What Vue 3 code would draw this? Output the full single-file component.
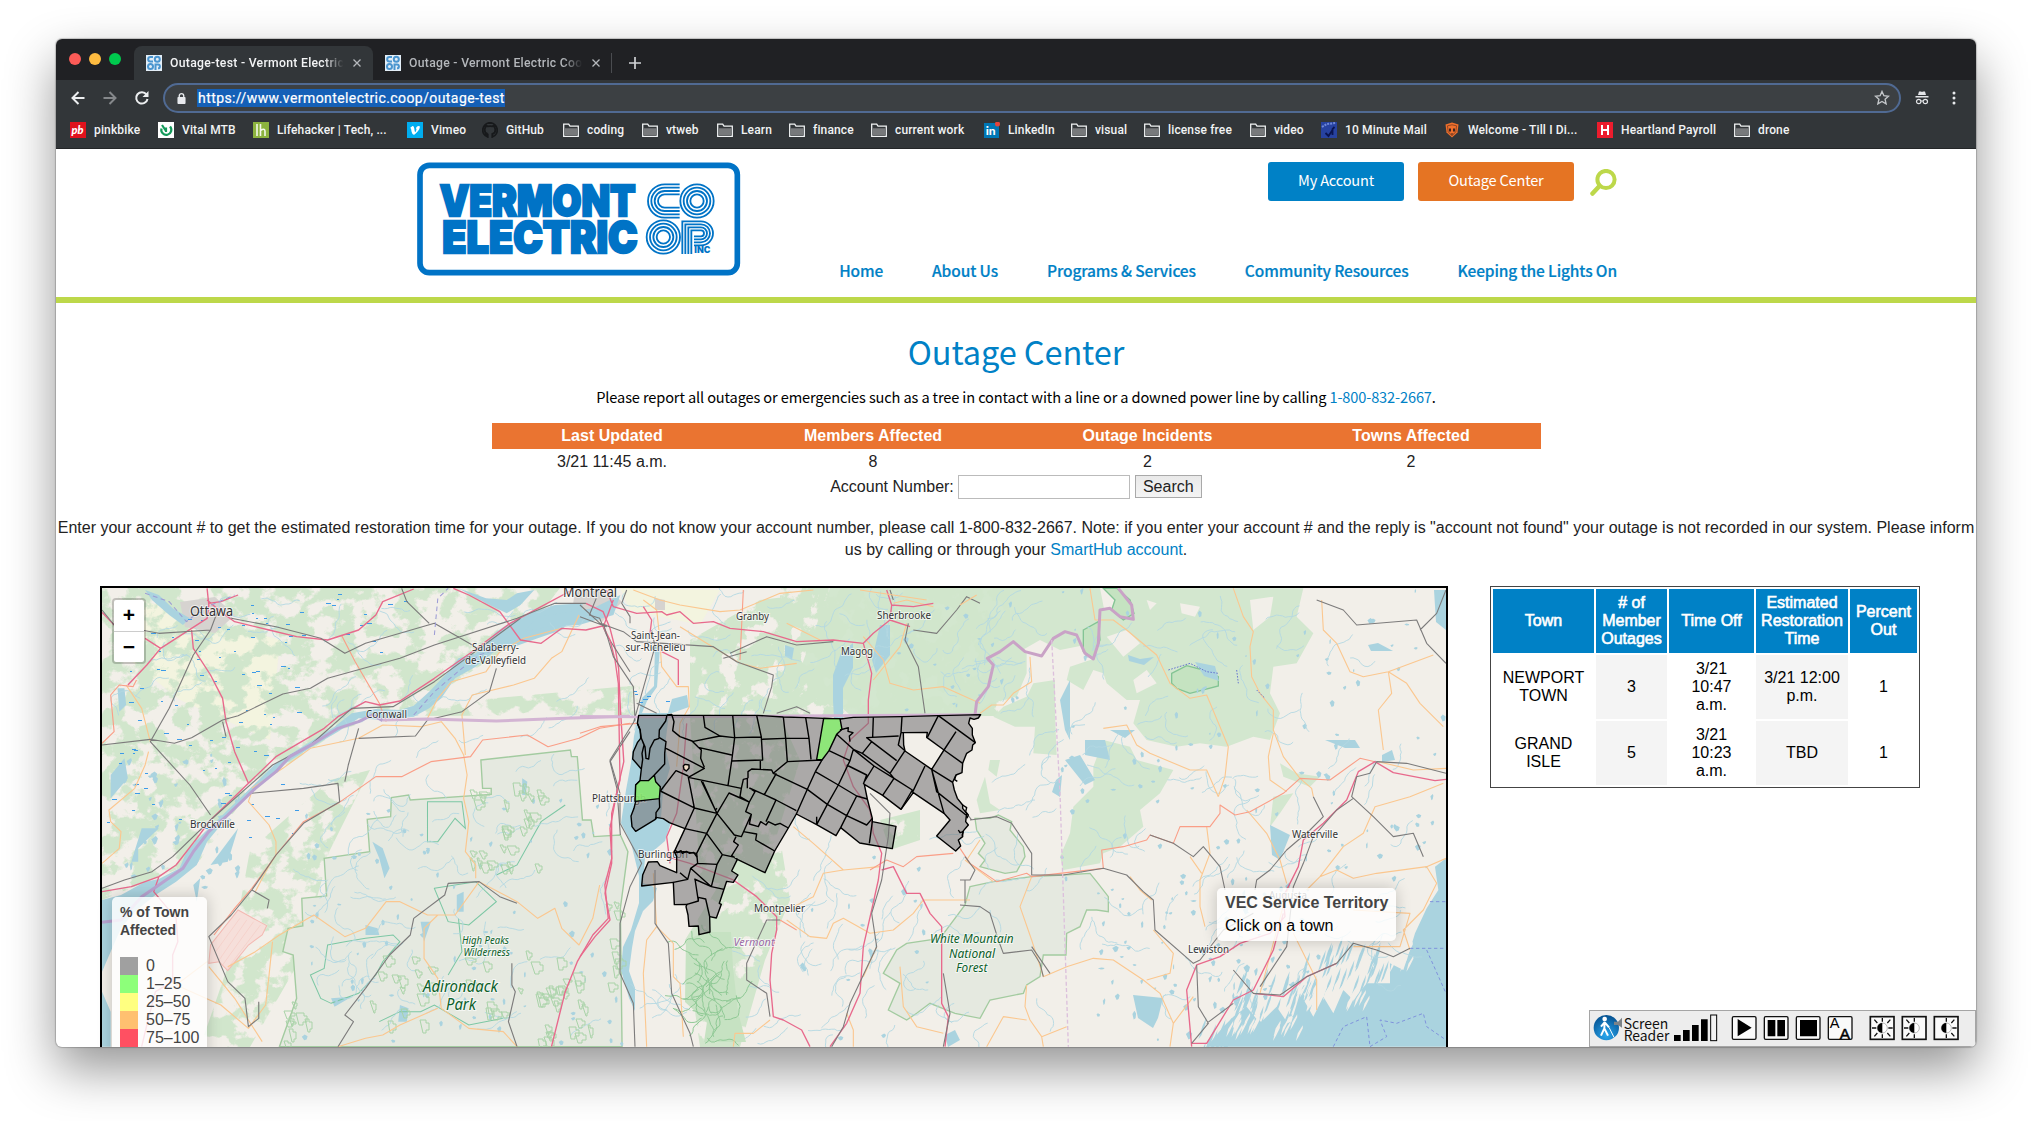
<script setup>
const bookmarks = [
  { label: 'pinkbike', icon: 'pb', width: 48 },
  { label: 'Vital MTB', icon: 'vital', width: 55 },
  { label: 'Lifehacker | Tech, ...', icon: 'lh', width: 114 },
  { label: 'Vimeo', icon: 'vimeo', width: 35 },
  { label: 'GitHub', icon: 'github', width: 41 },
  { label: 'coding', icon: 'folder', width: 39 },
  { label: 'vtweb', icon: 'folder', width: 35 },
  { label: 'Learn', icon: 'folder', width: 32 },
  { label: 'finance', icon: 'folder', width: 42 },
  { label: 'current work', icon: 'folder', width: 73 },
  { label: 'LinkedIn', icon: 'linkedin', width: 47 },
  { label: 'visual', icon: 'folder', width: 33 },
  { label: 'license free', icon: 'folder', width: 66 },
  { label: 'video', icon: 'folder', width: 31 },
  { label: '10 Minute Mail', icon: 'mail', width: 83 },
  { label: 'Welcome - Till I Di...', icon: 'shield', width: 113 },
  { label: 'Heartland Payroll', icon: 'heart', width: 97 },
  { label: 'drone', icon: 'folder', width: 34 },
]
const nav = ['Home', 'About Us', 'Programs & Services', 'Community Resources', 'Keeping the Lights On']
const outages = [
  { town: 'NEWPORT TOWN', count: 3, off: '3/21 10:47 a.m.', eta: '3/21 12:00 p.m.', pct: 1 },
  { town: 'GRAND ISLE', count: 5, off: '3/21 10:23 a.m.', eta: 'TBD', pct: 1 },
]
const legend = [
  { c: '#a0a0a0', t: '0' },
  { c: '#8dff7a', t: '1–25' },
  { c: '#ffff80', t: '25–50' },
  { c: '#ffc070', t: '50–75' },
  { c: '#ff5062', t: '75–100' },
]
// x, baseline, width, size
const cities = [
  ['Ottawa', 190, 616, 43, 14], ['Montréal', 563, 596.5, 54, 14], ['Salaberry-', 472, 651, 47, 11],
  ['de-Valleyfield', 465, 663.5, 61, 11], ['Cornwall', 366, 717.5, 41, 11], ['Brockville', 190, 827.5, 45, 11],
  ['Plattsburgh', 592, 802, 54, 11], ['Burlington', 638, 857.5, 50, 11], ['Saint-Jean-', 631, 638.5, 49, 11],
  ['sur-Richelieu', 625.5, 651, 60, 11], ['Granby', 736, 619.5, 33, 11], ['Sherbrooke', 877, 618.5, 54, 11],
  ['Magog', 841, 654.5, 32, 11], ['Montpelier', 754, 912, 51, 11], ['Waterville', 1292, 837.5, 46, 11],
  ['Lewiston', 1188, 952.5, 41, 11], ['Augusta', 1269, 899, 38, 11],
]
const parks = [
  ['High Peaks', 462, 944, 47, 11], ['Wilderness', 463.5, 956, 46.5, 11], ['Adirondack', 423, 992, 75, 15.5],
  ['Park', 446, 1010, 30, 15.5], ['White Mountain', 930, 943, 83.5, 12.5], ['National', 949, 957.5, 46, 12.5],
  ['Forest', 956, 971.5, 31.5, 12.5],
]

// deterministic scatter for ponds, brooks and park parcels
let seed = 7
const rnd = () => {
  seed = (seed * 16807) % 2147483647
  return seed / 2147483647
}
const walk = (x, y, n, step, dir) => {
  let d = `M${x.toFixed(1)} ${y.toFixed(1)}`
  for (let i = 0; i < n; i++) {
    dir += (rnd() - 0.5) * 1.3
    x += Math.cos(dir) * step
    y += Math.sin(dir) * step
    d += `L${x.toFixed(1)} ${y.toFixed(1)}`
  }
  return d
}
const scatter = (regions, fn) =>
  regions.map(([x, y, w, h, n, k]) => Array.from({ length: n }, () => fn(x + rnd() * w, y + rnd() * h, k || 1)).join('')).join('')
const pond = (x, y, k) => {
  const a = rnd() * 2.4 * k
  const b = 0.7 + rnd() * 2 * k
  const s = (rnd() - 0.3) * 3
  return `M${x.toFixed(1)} ${y.toFixed(1)}l${(1 + a).toFixed(1)} ${(-b).toFixed(1)}l${(1 + s).toFixed(1)} ${(b * 0.8).toFixed(1)}l${(-a * 0.5).toFixed(1)} ${(b * 1.5).toFixed(1)}l${(-1.5 - s * 0.5).toFixed(1)} ${(b * 0.4).toFixed(1)}z`
}
const ponds = scatter([
  [1060, 590, 385, 290, 100], [1090, 880, 230, 160, 100, 1.3], [300, 800, 320, 245, 90], [110, 750, 130, 140, 45, 1.5],
  [880, 590, 160, 120, 20], [800, 850, 150, 190, 20],
], pond)
const dashes = scatter([[103, 600, 200, 240, 95], [300, 590, 120, 80, 14], [630, 690, 50, 20, 6]], (x, y) => `M${Math.round(x)} ${Math.round(y) + 0.5}h${2 + Math.round(rnd() * 3)}`)
const brooks = scatter([
  [320, 680, 290, 350, 75], [630, 590, 400, 120, 55], [1000, 600, 430, 400, 105], [780, 830, 220, 210, 45],
  [140, 600, 460, 110, 32], [660, 940, 120, 100, 12],
], (x, y) => walk(x, y, 9 + Math.floor(rnd() * 10), 3, 1.9 + rnd() * 1.2))
const parcels = scatter([[470, 780, 80, 90, 30], [370, 950, 220, 90, 34], [535, 970, 60, 70, 18], [592, 900, 26, 130, 8], [284, 1000, 26, 42, 8]], (x, y) => {
  const a = 2 + rnd() * 7
  const b = 2 + rnd() * 5
  return `M${x.toFixed(0)} ${y.toFixed(0)}h${a.toFixed(0)}v${(b / 2).toFixed(0)}h3v${b.toFixed(0)}h-${(a / 2).toFixed(0)}v3h-${(a / 2).toFixed(0)}z`
})
const preserve = scatter([[692, 938, 36, 100, 34]], (x, y) => walk(x, y, 12, 3, rnd() * 6))
const inletsWater = scatter([[1205, 1012, 30, 30, 14], [1235, 965, 80, 55, 42], [1310, 935, 80, 45, 30]], (x, y) => `M${x.toFixed(1)} ${y.toFixed(1)}l-4 9l-4 13l3 -4l4 -11z`)
const inletsLand = scatter([[1225, 1012, 80, 14, 20], [1300, 975, 70, 22, 24], [1385, 900, 30, 60, 8]], (x, y) => `M${x.toFixed(1)} ${y.toFixed(1)}l-5 8l-2 8l3 -5l4 -8z`)
</script>

<template>
  <div class="stage">
    <div class="window">
      <div class="tabstrip">
        <div class="lights"><i class="r"></i><i class="y"></i><i class="g"></i></div>
        <div v-for="(t, i) in ['Outage-test - Vermont Electric Coop', 'Outage - Vermont Electric Coop']" :key="t" class="tab" :class="{ active: i === 0 }">
          <svg class="fav" viewBox="0 0 16 16"><rect width="16" height="16" fill="#e3eef7" /><g fill="none" stroke="#4a95cf" stroke-width="2"><path d="M7 2H4.500a2 2 0 0 0 0 4.600H7" /><circle cx="11.300" cy="4.300" r="2.500" /><circle cx="4.500" cy="11.500" r="2.500" /><path d="M9.500 15V9.500h2.500a1.900 1.900 0 0 1 0 3.800" /></g></svg>
          <span class="tab-title">{{ t }}</span>
          <svg class="x" viewBox="0 0 10 10"><path d="M1.500 1.500l7 7M8.500 1.500l-7 7" stroke="#b5b8bc" stroke-width="1.300" /></svg>
        </div>
        <div class="sep"></div>
        <svg class="plus" viewBox="0 0 12 12"><path d="M6 0v12M0 6h12" stroke="#d0d2d5" stroke-width="1.700" /></svg>
      </div>

      <div class="toolbar">
        <svg class="navs" viewBox="0 0 92 20" fill="none" stroke-width="2">
          <g stroke="#eceef0"><path d="M14.500 10H2.500M8.500 4l-6 6 6 6" /><path d="M76.500 6.500a5.700 5.700 0 1 0 1 4.500" /><path d="M78.500 3v6h-6z" fill="#eceef0" stroke="none" /></g>
          <path stroke="#85888b" d="M33.500 10h12M39.500 4l6 6-6 6" />
        </svg>
        <div class="omni">
          <svg class="lock" viewBox="0 0 10 13"><rect x="0.500" y="4.700" width="9" height="7.800" rx="1" fill="#e8eaed" /><path d="M2.500 5V3.500a2.500 2.500 0 0 1 5 0V5" fill="none" stroke="#e8eaed" stroke-width="1.500" /></svg>
          <span class="url">https://www.vermontelectric.coop/outage-test</span>
          <svg class="star" viewBox="0 0 16 16"><path d="M8 1.500l1.900 4.200 4.600.5-3.400 3.100 1 4.500L8 11.500l-4.100 2.300 1-4.500L1.500 6.200l4.600-.5z" fill="none" stroke="#c3c6c9" stroke-width="1.400" /></svg>
        </div>
        <svg class="incog" viewBox="0 0 14 14" fill="#e3e5e8"><path d="M4 0.500h2l1 .6 1-.6h2l1 3.500H3zM0.500 5h13v1.500h-13z" /><g fill="none" stroke="#e3e5e8" stroke-width="1.200"><circle cx="3.700" cy="10.500" r="2.200" /><circle cx="10.300" cy="10.500" r="2.200" /><path d="M6 10h2" /></g></svg>
        <svg class="dots" viewBox="0 0 4 14" fill="#e8eaed"><circle cx="2" cy="2" r="1.500" /><circle cx="2" cy="7" r="1.500" /><circle cx="2" cy="12" r="1.500" /></svg>
      </div>

      <div class="bookmarks">
        <div v-for="b in bookmarks" :key="b.label" class="bm">
          <svg viewBox="0 0 16 16">
            <g v-if="b.icon === 'folder'"><path d="M.7 14.300V2.200h5l1.300 1.900h8.300v10.200z" fill="none" stroke="#f1f3f4" stroke-width="1.300" /><path d="M2 6.200h12v6.900H2z" fill="#77797b" /></g>
            <g v-else-if="b.icon === 'pb'"><rect width="16" height="16" fill="#e0121d" /><text x="1.500" y="12" class="ic i" font-size="11">pb</text></g>
            <g v-else-if="b.icon === 'vital'"><rect width="16" height="16" fill="#fff" /><path d="M12 4.500a5 5 0 1 1-8.500 2M8 10V5.500M4 3l4 6" fill="none" stroke="#159a5b" stroke-width="2.200" /></g>
            <g v-else-if="b.icon === 'lh'"><rect width="16" height="16" fill="#8cb33e" /><path d="M4 2v12M7.500 2v12M7.500 8.500q4.500-3 4.500 1V14" fill="none" stroke="#f4f8ea" stroke-width="1.600" /></g>
            <g v-else-if="b.icon === 'vimeo'"><rect width="16" height="16" fill="#00adef" /><path d="M3 6l2.500-2q1.500-.5 2 4t2-.5l-.5-1.500q1.500-3 4-1.500-.5 4-5.500 8-2 1-3-3L4 6.500z" fill="#fff" /></g>
            <g v-else-if="b.icon === 'github'"><path d="M8 .8A7.300 7.300 0 0 0 5.700 15v-2.300q-2 .2-2.600-1.500M8 .8A7.300 7.300 0 0 1 10.300 15v-3q3-.5 3-4 0-1.500-.8-2.500.3-1-.1-2-1 .1-2 .9-2.300-.5-4.800 0-1-.8-2-.9-.4 1-.1 2-.8 1-.8 2.500 0 3.500 3 4" fill="none" stroke="#17191b" stroke-width="1.800" /></g>
            <g v-else-if="b.icon === 'linkedin'"><rect y="1" width="15" height="15" fill="#0077b5" /><text x="1.700" y="13" class="ic" font-size="12">in</text><circle cx="13.500" cy="2" r="2.500" fill="#e5443c" /></g>
            <g v-else-if="b.icon === 'mail'"><rect width="16" height="16" fill="#2742a0" /><path d="M1 5l5-3 9-1" stroke="#6f88d6" stroke-width="2" stroke-dasharray="2 1" fill="none" /><path d="M13.500 5l-2 2v6M11.500 8l-4 6-3-3" stroke="#0a1450" stroke-width="1.800" fill="none" /></g>
            <g v-else-if="b.icon === 'shield'"><path d="M1.500 2.500L8 .5l6.500 2-1 8L8 15.500l-5.500-5z" fill="#f0702c" /><path d="M5 6.500h2v3H5zM9 6.500h2v3H9zM6.500 11.500h3L8 13z" fill="#3c2420" /><path d="M3.500 3.800L8 2.800l4.500 1-.7 6L8 13.800l-3.800-4z" fill="none" stroke="#7a3a20" stroke-width=".8" /></g>
            <g v-else><rect width="16" height="16" fill="#ec1c2d" /><path d="M5 3v10M11 3v10M5 8h6" stroke="#fff" stroke-width="2" /></g>
          </svg>
          <span :style="{ width: b.width + 'px' }">{{ b.label }}</span>
        </div>
      </div>

      <header class="site">
        <svg class="logo" viewBox="0 0 972 342">
          <rect x="9" y="10" width="952" height="322" rx="28" fill="none" stroke="#0073c6" stroke-width="17" />
          <g fill="#0073c6" stroke="#0073c6" class="logotext">
            <text x="68" y="162" font-size="127" textLength="588" lengthAdjust="spacingAndGlyphs" stroke-width="7">VERMONT</text>
            <text x="76" y="274" font-size="131" textLength="586" lengthAdjust="spacingAndGlyphs" stroke-width="7">ELECTRIC</text>
          </g>
          <g fill="none" stroke="#0073c6" stroke-width="5.500" transform="translate(-50 -38)">
            <g v-for="r in [50, 40, 30, 20]" :key="r">
              <path :d="`M838 ${155 - r}H793a${r} ${r} 0 0 0 0 ${2 * r}H838`" />
              <circle cx="789" cy="263" :r="r" />
            </g>
            <circle cx="890" cy="155" r="53" fill="#fff" stroke="none" />
            <circle v-for="r in [50, 40, 30, 20]" :key="'o' + r" cx="890" cy="155" :r="r" />
            <path d="M846 314V216H902a36 36 0 0 1 0 72H881" />
            <path d="M855 314V225H902a27 27 0 0 1 0 54H881M864 314V234H902a18 18 0 0 1 0 36H881M873 314V243H902a9 9 0 0 1 0 18H881" />
          </g>
          <text x="832" y="273" font-size="26" font-weight="800" class="logotext" fill="#0073c6" textLength="48" lengthAdjust="spacingAndGlyphs">INC</text>
        </svg>
        <div class="right">
          <div class="buttons">
            <a class="btn blue">My Account</a><a class="btn orange">Outage Center</a>
            <svg class="mag" viewBox="0 0 27 27" fill="none" stroke="#bdd84a"><circle cx="16" cy="10.500" r="8.600" stroke-width="4" /><path d="M9.500 17L2.500 24.500" stroke-width="4.500" stroke-linecap="round" /></svg>
          </div>
          <nav><a v-for="n in nav" :key="n">{{ n }}</a></nav>
        </div>
      </header>

      <main>
        <h1>Outage Center</h1>
        <p class="report">Please report all outages or emergencies such as a tree in contact with a line or a downed power line by calling <a>1-800-832-2667</a>.</p>
        <div class="summary head"><b>Last Updated</b><b>Members Affected</b><b>Outage Incidents</b><b>Towns Affected</b></div>
        <div class="summary"><span>3/21 11:45 a.m.</span><span>8</span><span>2</span><span>2</span></div>
        <div class="form"><label>Account Number:</label><input type="text" /><button>Search</button></div>
        <p class="note"><span class="n1">Enter your account # to get the estimated restoration time for your outage. If you do not know your account number, please call 1-800-832-2667. Note: if you enter your account # and the reply is "account not found" your outage is not recorded in our system. Please inform</span><br />us by calling or through your <a>SmartHub account</a>.</p>

        <div class="content">
          <div class="map">
            <svg class="tiles" viewBox="102 588 1344 459" width="1344" height="459">
              <defs>
                <filter id="wood" x="0" y="0" width="1" height="1" color-interpolation-filters="sRGB"><feTurbulence type="fractalNoise" baseFrequency=".045 .055" numOctaves="6" seed="4" /><feColorMatrix values="0 0 0 0 .82 0 0 0 0 .902 0 0 0 0 .8 11 0 0 0 -4.9" /></filter>
                <filter id="dense" x="0" y="0" width="1" height="1" color-interpolation-filters="sRGB"><feTurbulence type="fractalNoise" baseFrequency=".05" numOctaves="6" seed="9" /><feColorMatrix values="0 0 0 0 .82 0 0 0 0 .902 0 0 0 0 .8 13 0 0 0 -4.6" /></filter>
                <clipPath id="cw"><path d="M102 588H560L520 640L420 705L340 730L250 790L200 860L102 900ZM420 705L640 685V715L420 716ZM250 850L330 780L370 770L330 850L300 960L250 1047H200L230 960Z" /></clipPath>
                <clipPath id="cd"><path d="M690 640L760 600L860 588H1010V716H690ZM722 880L782 850L790 900L765 960L740 1047H700L685 940ZM690 716H780L800 760L760 890L700 880ZM780 588H1010V700H780ZM880 820l40-10 0 30-30 10z" /></clipPath>
              </defs>
              <rect x="102" y="588" width="1344" height="459" fill="#f2efe9" />
              <path d="M140 600L280 640L270 740L180 700L130 660ZM620 588L720 590L700 625L630 610Z" fill="#f3f5dc" opacity=".8" />
              <g clip-path="url(#cw)"><rect x="102" y="588" width="560" height="459" filter="url(#wood)" /></g>
              <path d="M575 590l35 0 12 12-20 20-30-10zM180 602l35-5 20 18-20 18-30-6zM890 598l30 4 6 20-20 8zM655 598l10 2 0 10-10 0z" fill="#d6d3d0" />
              <path d="M830 588H1100L1110 640L1060 650L1040 640L1005 660L980 715H850L800 670Z" fill="#d3e7cf" />
              <g clip-path="url(#cd)"><rect x="680" y="588" width="340" height="459" filter="url(#dense)" /></g>

              <g transform="translate(960 580) scale(.33333)">
                <path fill="#d3e7cf" d="M475 25H1030L1010 110L1060 160L1010 250L940 260L930 340L960 400L930 480L880 470L800 500L720 490L650 500L560 480L520 430L540 360L500 360L440 310L430 280L400 270L370 330L320 300L330 260L400 237L420 180L420 90L455 85ZM120 215L160 185L200 215V280L170 350L90 370L50 400L60 350L90 320L100 255ZM220 310L285 300V400L290 525L220 520L225 440L165 440L100 410L130 380L200 350ZM430 480L510 500L530 540L640 570L600 640L540 690L550 740L480 800L430 820L420 850L310 870L300 830L330 760L340 680L400 620L400 560ZM75 590L90 670L120 690L60 700L50 660ZM960 550L1010 580L1080 590L1050 620L970 590ZM940 650L1000 640L960 700L930 740ZM90 540L120 540L110 590L85 570Z" />
                <path fill="#f2efe9" d="M660 70l60 10-15 30-40-10zM870 60l70-10-10 60-50 40zM560 60l30 10-20 20zM440 170l60-20 40 40-50 40zM520 300l40-30 30 40-60 30z" />
                <g fill="#e5e9e0" stroke="#a3cba0" stroke-width="4">
                  <path d="M45 715L90 715L115 705L155 725L150 750L190 800L195 830L170 875L135 880L60 860L75 840L55 820L75 790L50 750Z" />
                  <path d="M30 920L100 905L215 890L310 885L390 880L410 905L445 950L445 995L410 990L380 990L360 1040L320 1060L318 1125H250L240 1190L200 1215L190 1240L90 1260L60 1315L-15 1300L-90 1270L-130 1300L-160 1320L-215 1290L-180 1210L-230 1180L-190 1110L-160 1090L-60 1075L15 975Z" />
                </g>
                <path fill="#c5e3c1" stroke="#83c494" stroke-width="4" d="M635 280L680 257L730 270L775 290V318L690 340L650 325L635 310ZM370 150L415 125L420 180L400 235L370 215ZM430 25L470 25L510 60L522 100L490 120L455 90L465 60Z" />
              </g>

              <g transform="translate(90 575) scale(.34438 .33333)">
                <path fill="#e5e9e0" stroke="#a3cba0" stroke-width="4" d="M1135 555L1395 525L1398 545L1415 545L1430 735L1455 735L1463 785L1540 780L1562 830L1540 1000L1545 1415H550L600 1270L590 1140L560 1130L575 1060L618 1053L615 970L687 963L680 850L812 830L805 733L873 725L875 668L925 660L930 675L1165 658V640H1140Z" />
                <path fill="#f6dfda" stroke="#f3b9b2" stroke-width="3" d="M430 1005L513 1052L500 1080L460 1110L400 1187L375 1160L345 1165L350 1110Z" />
                <path d="M365 1130l70-100M375 1155l80-120M385 1170l90-130M400 1180l95-130" stroke="#f3c5be" stroke-width="1.500" />
                <g fill="#aad3df">
                  <path d="M35 975L90 960L160 920L200 912L260 880L280 830L330 775L400 705L470 635L540 565L640 500L710 455L760 415L830 402L900 405L940 392L985 350L1040 290L1070 250L1120 235L1180 170L1240 130L1290 110L1350 90L1430 85V115L1400 130L1370 165L1300 190L1240 212L1180 225L1120 275L1060 310L1020 370L985 400L940 425L850 435L780 430L720 470L650 512L560 570L480 640L400 725L340 800L310 870L250 920L190 960L130 1010L90 1060L60 1130L35 1190Z" />
                  <path d="M35 1250L60 1310V1415H35ZM1070 40L1150 70L1210 75L1240 55L1290 45L1250 90L1210 115L1150 85ZM1460 100L1540 60L1520 120L1420 150L1330 155L1260 170L1300 125ZM160 45L200 60L240 100L290 130L270 150L230 120L180 75ZM80 340l20 0 5 50-20 20zM60 600l40-50 10 60-50 60zM150 760l50 0-60 60 0 40-20 0zM820 800l30 20 20 60-15 30-15-60zM800 1050l35 10 5 20-40 0zM960 1040l30 0-20 60zM1065 960l20-10 0 60-20 0zM900 1290l25 10-5 40-25 0zM1255 610l15 10-5 40-10 0zM700 1270l60-5-50 30zM350 870l80-110-30 100zM300 930l20-20-10 70z" />
                </g>
                <g fill="none" stroke="#7cc7a4" stroke-width="3"><path d="M700 1285L780 1255L830 1200L850 1160L900 1100L880 1080L800 1090L740 1100L690 1110L680 1180L640 1200L670 1270ZM980 680L1080 680L1090 760L1060 730L1010 800L980 800ZM1000 940L1120 920L1180 980L1100 1050L1040 1040ZM1040 1200L1080 1130L1070 1030M840 1340L900 1310L960 1310L1000 1290L1100 1350L1200 1330M1180 900L1240 870L1310 740L1380 690" /></g>
              </g>
              <path d="M655 645l5 2-3 40-10 14-5 12h26l4-14 15-4 2 12-20 7-4 32 5 22-7 24-2 26 10 4-6 19-20 17-2 25 14 5-4 13-10 10-8 20-3 17-3 23 6 17v23l-6-13-8-28 2-23 8-17 8-27v-27l-8-33-10-20 5-33 5-27 3-27 8-38 12-12z" fill="#aad3df" />
              <path d="M640 716h20l-4 14-6 26-8 12zM833 675l8-22 12-10 0 25-10 20 0 30h-9l-1-17zM785 645l9 3-2 12-7-4zM872 660l8-35 10 0 0 30-14 18zM1128 655l12 4 14-2-10 8-15-4zM1195 662l20 4 4 15-15-5zM1060 700l10-20 0 60-5-10zM1085 740l20 0 5 20-25-5zM1110 730l25 0-10 8zM1056 780l6-5-2 22-8-5zM1085 785l10-5-15-25-15 5zM1368 645l10-2 15 8-22 0zM1382 755l10-5 3 10-13 2zM1133 995l30 3-5 20-5 10-15-10zM1270 825l20 10-10 25-8-5zM1434 590h12v40l-10-8zM1325 740l30 0 5 8-15 0zM945 1035l10-5 5 10-12 7z" fill="#aad3df" />
              <path :d="ponds" fill="#aad3df" />
              <g transform="translate(960 580) scale(.33333)">
                <path fill="#aad3df" d="M1458 835L1425 860L1435 930L1400 985L1365 1060L1350 1110L1330 1170L1290 1150L1290 1210L1220 1210L1180 1260L1150 1230L1120 1300L1090 1250L1060 1310L1020 1240L990 1340L950 1280L900 1330L860 1280L820 1310L790 1340L740 1400H1458Z" />
              </g>
              <path :d="inletsWater" fill="#aad3df" />
              <path :d="inletsLand" fill="#f2efe9" />
              <path :d="brooks" fill="none" stroke="#b3d8e2" stroke-width=".9" />
              <path :d="dashes" stroke="#3d9be8" stroke-width="1" />
              <path :d="parcels" fill="none" stroke="#a9d3a8" stroke-width="1" />
              <path d="M686 940l20-8 25 0 2 35 5 45 8 30H704l3-20-22-20z" fill="#c6e2c2" />
              <path :d="preserve" fill="none" stroke="#8fc995" stroke-width="1" />

              <g fill="none" stroke-width="3.300" stroke-linejoin="round">
                <g transform="translate(90 575) scale(.34438 .33333)">
                  <g stroke="#fbc78f">
                    <path d="M170 530L160 570L130 640L55 705L60 740L90 770L85 820L35 865M470 650L460 680L520 750L540 800L540 840L510 890L480 950M470 640L560 580L640 520L780 490L850 450L960 455L1020 440L1060 490L1085 540L1095 600L1085 670L1100 740L1090 830L1120 870L1120 910M1130 920L1060 1020L980 1020L900 980L860 980L800 1060L740 1085L650 1020L600 1050L550 1080L480 1130L400 1175M530 1100L520 1200L510 1290L460 1360M1010 1020L970 1060L970 1150L1010 1210L1020 1300L1100 1360L1200 1370L1240 1415M1010 1300L900 1350L850 1380L800 1390L720 1415M1130 920L1240 980L1300 1030L1350 1000L1370 1060L1420 1110L1460 1030L1480 930M1090 540L1080 420L1110 360L1230 330L1290 310L1340 250L1370 230L1420 120M980 430L1010 370L1050 320L1150 290L1190 230L1260 190L1370 160M105 330L150 400L175 500M345 1175L420 1270L500 1400M460 1360L380 1290L250 1230L340 1160" />
                  </g>
                  <g stroke="#fa9e87">
                    <path d="M35 505L70 470L60 360L85 330L125 335L135 315M730 180L770 260L840 385L860 440M360 1080L420 1000L470 940L540 840L620 740L720 685L830 605L905 605L990 560L1105 545L1140 495L1270 480L1330 515L1420 490L1480 460L1568 445" />
                  </g>
                  <g stroke="#e8698c" stroke-width="4">
                    <path d="M35 112L70 150M110 330L165 270L205 220L340 130L345 90L340 40M160 190L205 220M295 165L300 220L350 300L385 370L395 440L420 530L460 625M340 75L380 110L420 140L520 165L600 185L690 195L780 165L830 120L850 80L940 42M35 950L120 935L200 905L250 870L310 790L350 735L460 625L540 545L680 460L720 425L800 380L840 390L900 378L1000 310L1110 230L1220 145L1310 95L1400 45M200 905L185 950L250 1030L255 1100L240 1140V1220L190 1250L165 1350L150 1415M1055 40L1100 60L1190 110L1250 195L1310 205L1370 160L1440 165L1500 150M1440 85L1490 110L1510 160L1525 220L1535 280L1540 400L1550 560L1530 650L1510 760L1515 850L1495 930L1505 1030L1460 1080L1415 1160L1380 1250L1340 1415M430 60L380 80L345 85" />
                  </g>
                  <g stroke="#7c7b7b">
                    <path d="M35 510L175 493L245 505L295 488L385 435L430 422L560 357L640 340L690 310L900 250L1000 210L1240 130L1350 85L1440 85M175 500L230 400L300 240L350 165L370 110M350 165L200 175L70 150L35 105M175 500L290 630L350 720M35 940L100 915L180 890L240 845L350 735L470 625L530 570L640 510L760 400L880 395L1000 320L1250 130M410 130L540 155L670 190L740 235L800 205L1000 145L1110 210M905 40L920 80L985 145M1470 70L1450 120L1480 130L1500 180L1568 290M465 655L620 640L720 625L725 680L620 745L540 840L470 945L410 1020L345 1085L400 1220L450 1270L460 1355L490 1330V1280M385 440L395 485M780 460L750 570L740 620M780 490L945 483L980 435L1080 410L1160 350L1180 280M1240 985L1190 965L1130 920L1040 925L1030 960L940 1030L930 1080L870 1140L800 1240L740 1320L765 1340L720 1415M1225 1165V1230L1235 1250L1215 1340L1240 1415M1568 470L1510 560L1530 640L1540 780M470 945L520 975L515 1000" />
                  </g>
                  <path stroke="#b9a3d0" stroke-width="9" d="M35 1042L90 1035L150 965L200 930L270 880L300 830L345 770L400 720L480 640L540 590L580 545L650 505L720 460L780 440L820 420L850 437" />
                  <path stroke="#d3b4d3" stroke-width="9" d="M850 435L980 432L1180 438L1380 430L1568 424" />
                  <path stroke="#9c9bd5" stroke-width="3" stroke-dasharray="14 10" d="M940 420L1000 350L1080 280L1130 240L1190 220M160 55L230 80L280 140L330 100L420 60M1000 180L1010 70L1040 40" />
                </g>
                <g transform="translate(580 580) scale(.33333)">
                  <g stroke="#fbc78f">
                    <path d="M160 30L240 60L300 75L420 95L480 90L600 40L700 30M240 190L245 260L290 320L325 320L328 380L300 430L290 560M300 140L380 190L430 220L480 250L540 265L650 250M620 130L720 180M850 170L910 240L930 310L1000 330L1090 320L1200 370M980 130L960 200L880 300M240 180L230 90L190 60M640 740L700 790L790 870L900 860M640 980L700 950L730 880L790 870M620 1020L690 1070L740 1075L760 1030L790 1015L870 1060L940 1050L1000 1000L1030 960L1170 960M890 1100L850 1190M220 880L230 1040L200 1080L190 1180L200 1400M230 1040L280 1090L280 1190L300 1210L310 1370M460 1400L465 1360L520 1360L570 1320M800 1300L820 1350L820 1400M960 1160L970 1280L1010 1340L1090 1360M1060 80L980 60L940 70" />
                  </g>
                  <g stroke="#fa9e87"><path d="M490 30L480 240M600 1020L650 1050M870 870L920 840L970 860L1010 830L1120 820M0 460L60 440L170 430" /></g>
                  <g stroke="#e8698c" stroke-width="4">
                    <path d="M80 30L100 80L170 100L245 95L260 105L300 95L340 130L400 125L450 145L550 155L650 185L760 180L850 190L880 160L930 120L935 75L920 30M935 75L1000 80L1060 70M930 120L990 140M245 215L295 240V315M100 60L70 140L90 180L105 240L115 310L120 600L95 700L95 850L75 940L90 1020L45 1070L0 1130M190 80L215 120L210 160M850 190L875 280L865 360L865 430L810 480L790 540L820 620L870 690L880 760L905 820L895 900L875 990L850 1100L840 1240L800 1330L750 1400M905 870L940 860L980 940L1020 940L1050 1000L1085 1040L1085 1270L1105 1310L1095 1400M270 850L260 770L290 700L310 560L320 430M260 830L330 850L460 900L530 950L590 1010L590 1050L575 1120L570 1200L580 1310L610 1320L665 1350L690 1400" />
                  </g>
                  <g stroke="#7c7b7b">
                    <path d="M0 75L60 130L130 155L170 185L400 200L470 245L580 285L575 320L550 400M215 150L225 200L160 430M70 130L100 230L160 320L165 420L90 540L120 640L120 730L185 850L150 920L120 1030L120 1180L160 1270L165 1400M450 220L560 170L650 195L760 185M140 30L125 70L150 110L150 130M1000 150L1070 160L1130 90L1160 50L1200 70M985 130L975 180L1015 260L1035 400M430 235L500 215M590 400L650 380L690 400M225 870L225 1030L265 1090L275 1240L330 1360L340 1400M600 1020L560 1020L500 1150L500 1200L560 1240L570 1310M870 640L930 700L925 770L905 900L875 1000L890 1100L810 1270L790 1340L755 1400M1090 1180L1110 1300L1090 1400M940 60L930 30M170 370L230 400M0 110L80 140" />
                  </g>
                  <path stroke="#d3b4d3" stroke-width="8" d="M0 409L175 411L1200 404" />
                </g>
                <g transform="translate(960 580) scale(.33333)">
                  <g stroke="#fbc78f">
                    <path d="M-300 30L-100 60M0 75L50 45M60 400L95 375L130 375L160 340L215 305L210 230M390 25L405 120L460 120L500 150L590 225L630 310L690 355L740 345L780 440L805 500L795 590L775 650M820 25L850 110L880 155L870 200L875 290L900 340L940 390V450L970 530L1020 595L1055 625L1060 650M940 460L925 530L930 600L980 635M430 445L500 435L530 495L570 520L690 570H740L775 650M1085 60L1090 150L1130 190L1170 275L1210 290L1285 275L1420 225M1285 275L1340 310L1380 370L1450 440M1285 275L1295 340L1255 390L1260 430L1270 510M1255 545L1360 570L1458 565M1450 610L1350 650L1245 680L1210 760L1150 800L1080 890L1040 930M1080 890L1130 870L1180 895L1250 880L1400 860L1458 835M1400 860L1430 910L1390 990L1330 1050L1350 1110M740 740L750 820L720 900L720 980L735 1040M860 690L920 760L960 840L980 910M690 830L725 880M510 890L540 930L575 960M580 1050L640 1120L630 1180L560 1200M15 840L100 905M215 890L180 980L215 1080L250 1190L320 1160L400 1135L460 1140L550 1200L600 1240L640 1330L630 1400M200 1215L195 1280L210 1320L245 1370L320 1340M245 1370L250 1400M80 1400L130 1310L200 1320M640 1330L700 1250M985 920L900 1240M1000 1060L1070 1200L1070 1290M1180 1100L1320 1100L1350 1000L1180 990M20 840L60 780" />
                  </g>
                  <g stroke="#fa9e87"><path d="M0 805L30 850L110 905L200 880L215 890L430 865L425 810L490 800L560 780L570 765L640 790L660 740L750 740L780 700V675L825 705L870 695L970 640L1020 595L1110 600L1200 535L1245 545" /></g>
                  <g stroke="#e8698c" stroke-width="4"><path d="M1458 598L1425 602L1300 578L1245 545L1195 575L1160 660L1090 730L1030 780L1015 860L970 950L975 1010L930 1060L840 1090L780 1130L710 1155L680 1230L695 1400M970 1000L940 1110L880 1230L820 1260L740 1390L695 1390M880 1240L970 1250L1040 1190L1130 1150" /></g>
                  <g stroke="#7c7b7b"><path d="M1070 60L1150 90L1190 135L1370 120L1400 190L1458 250M1380 150L1430 100L1458 30M1458 580L1340 550L1250 545L1230 580L1190 590L1175 650L1240 710L1300 770L1360 760L1390 830M1180 655L1130 690L1060 770L1030 850L1000 920L980 1100L900 1220M1060 650L1090 710L1050 750L980 810L930 870L890 900L885 930M30 720L110 710L155 730L215 820L215 885L310 885L430 865L500 885L550 935L580 960L585 1050L700 1150L720 1140L790 1050L880 1000M570 765L640 790L700 830L730 800L780 860L795 930M710 1155L715 1280L745 1330L695 1390M0 975L60 980L90 1000L115 1080L130 1120L215 1110L240 1150L250 1190M820 1170L880 1240L960 1245L1040 1190L1130 1150L1180 1090L1250 1110L1300 1130L1350 1105M820 1270L740 1330M35 720L20 700M0 900H30L45 870L15 830M15 900L15 970M215 1100L270 1180" /></g>
                  <path stroke="#c9a2c6" stroke-width="9" d="M45 405L50 365L85 320L100 255L82 235L120 215L160 185L195 215L245 228L280 175L315 155L350 165L375 220L400 237L415 190L420 90L450 85L480 110L520 118L515 75L475 25" />
                  <path stroke="#dcc0dc" stroke-width="4" stroke-dasharray="12 7" d="M275 180L300 640L325 1400" />
                  <path stroke="#7f93dc" stroke-width="3" stroke-dasharray="10 8" d="M1350 1105H1458M1400 1110L1458 1240M1410 965H1458M1120 1400L1150 1340L1220 1310L1230 1400L1280 1370L1260 1320L1310 1330L1390 1300L1400 1340L1458 1380" />
                  <path stroke="#6878d0" stroke-width="3" stroke-dasharray="5 4" d="M625 270L690 250L740 275L775 280M830 270L835 310M890 330L915 355" />
                </g>
              </g>

              <g class="labels">
                <text v-for="c in cities" :key="c[0]" :x="c[1]" :y="c[2]" :textLength="c[3]" :font-size="c[4]" lengthAdjust="spacingAndGlyphs">{{ c[0] }}</text>
              </g>
              <g class="labels park">
                <text v-for="c in parks" :key="c[0]" :x="c[1]" :y="c[2]" :textLength="c[3]" :font-size="c[4]" lengthAdjust="spacingAndGlyphs">{{ c[0] }}</text>
                <text class="state" x="733.500" y="945.500" textLength="41" font-size="11" lengthAdjust="spacingAndGlyphs">Vermont</text>
              </g>

              <g transform="translate(620 690) scale(.33333)" stroke="#000" stroke-width="4.200" stroke-linejoin="round" fill="none">
                <path fill="#757475" fill-opacity=".57" fill-rule="evenodd" d="M56 76H250L410 76L490 81L557 83L660 87L700 82L846 80L955 77L1082 74L1075 84L1062 88L1050 84L1046 100L1057 115V135L1066 158L1058 165L1056 180L1040 190L1028 220L1026 248L1008 255L998 277L1003 300L1012 325L1028 345L1028 355L1040 370L1037 395L1045 405L1028 425L1028 440L1015 450L1022 468L1007 483L950 438L990 390L972 370L880 308L843 358L788 316L733 283L742 327L757 385V395L828 409L817 476L719 459L662 413L648 437L590 404L529 372L505 414L464 483L435 548L352 508L335 543L354 555L340 577L320 574L312 598L298 640L304 643L289 684L269 680L270 726L237 734L235 708L207 709L204 675L198 650L201 643L163 644L160 577L65 588L68 555L85 516L112 515L120 527L170 548V500L163 485L195 416L148 398L130 386L108 382L106 388L47 424L36 410L33 378L42 355L47 334V285L60 272L64 237L38 207L40 185L52 158L62 145L61 120L52 100ZM850 128L922 127L920 142L972 180L935 238L855 183L851 165Z" />
                <path d="M52 100L60 120L64 145L75 170L78 205L86 207L90 175L103 150L118 145M64 145L72 165L66 190L68 208L64 237" />
                <path fill="#f2dfca" d="M190 228l5-5 12 2 0 10-8 8-7-5z" />
                <path fill="#87f56d" fill-opacity=".8" d="M47 285L60 272L85 272L103 255L107 275L121 290L118 326L45 334ZM611 85L660 86L666 118L650 133L627 182L606 210L590 208L600 150Z" />
                <path d="M141 75L137 93L118 120L117 142L138 155L134 190V222L103 255M138 175L253 235L205 262M121 303L168 242L205 258M118 326L119 352L108 368V388M141 75L155 73L162 95L158 122L180 140L216 153L235 172L244 180L242 205L253 232M250 75L255 112L300 138L342 143M216 155L300 138M235 172L335 195M338 75L344 143L335 213L324 287M344 143L424 141M410 76L424 141L428 210L335 213M424 148L494 145H567M490 81L497 145L502 215L606 210M557 83L567 145L573 208M421 212V238M324 287L205 262L223 354L291 370L244 273M121 303L223 354L195 416L260 430L291 370M248 275L286 360L291 355M324 287L364 295L370 268L382 265V295M384 265V245L395 237L455 240L460 250L502 215M364 295L360 320L388 336M388 294L433 314L468 330L438 395M460 250L562 298L529 372M469 250L433 314M291 370L327 309L388 336M388 336L405 305L388 294M388 336L377 365L394 373L388 402L415 410L422 395L438 405L445 395L465 405L480 400L505 414M394 373L364 440L343 435L291 370M370 425L410 432L407 450L464 483M348 440L341 455L355 465L335 497L352 508M468 330L529 362M260 430L307 494L291 523L233 520M260 430L230 490M165 488L190 485L230 490L233 520L212 535L203 568L180 548M307 494L345 502M291 523L274 590L312 598M212 535L274 590M203 568L160 577M223 567L274 590M225 567L235 633L201 643M235 633V622L257 627L269 680M586 245L606 210M586 245L562 298L622 343L590 404M627 182L690 212L655 285L586 245M655 285L622 343L680 377L662 413M650 133L700 178L690 212M680 225L740 255L730 283M655 285L710 318L742 327M710 318L680 377L740 405L757 385M757 395L748 460M700 178L727 190L755 155L740 143L836 138M855 182L810 250L727 190M760 82L758 140M846 80L843 128L835 165L855 182M843 128H852M755 155L830 212M700 178L762 228L733 275M762 228L822 265L788 316M822 265L877 300L843 358M810 250L822 265M915 228L877 308M935 238L972 370M935 238L998 277M935 238L950 305L1038 375M972 180L1028 220M922 142L955 77L1066 158M1008 125L972 180M660 120L685 113L684 124L699 128L688 138L690 155M529 372L562 298M590 404L590 380" />
                <path d="M165 480l8 7 10-5 4 8 12-6 10 6 12-3 10 14M1008 255l-4 14 8 5M1015 420l5 8 10-3-4 12M1028 345l12 8-3 12 8 10-4 10" />
              </g>
            </svg>
            <div class="zoom"><b>+</b><b class="minus">−</b></div>
            <div class="info"><h4>VEC Service Territory</h4>Click on a town</div>
            <div class="legend"><h5>% of Town Affected</h5>
              <div v-for="l in legend" :key="l.t" class="lg"><i :style="{ background: l.c }"></i>{{ l.t }}</div>
            </div>
          </div>
          <table class="outages">
            <thead><tr><th class="c1">Town</th><th class="c2"># of Member Outages</th><th class="c3">Time Off</th><th class="c4">Estimated Restoration Time</th><th class="c5">Percent Out</th></tr></thead>
            <tbody>
              <tr v-for="o in outages" :key="o.town"><td>{{ o.town }}</td><td class="alt">{{ o.count }}</td><td class="narrow">{{ o.off }}</td><td class="alt">{{ o.eta }}</td><td>{{ o.pct }}</td></tr>
            </tbody>
          </table>
        </div>
      </main>

      <svg class="reader" viewBox="0 0 1161 111" width="387" height="37">
        <defs><radialGradient id="ball" cx=".5" cy=".8" r=".8"><stop offset="0" stop-color="#29a8ef" /><stop offset="1" stop-color="#05508f" /></radialGradient></defs>
        <rect x="1.500" y="1.500" width="1158" height="108" fill="#ededed" stroke="#a5a5a5" stroke-width="3" />
        <circle cx="52" cy="53" r="38" fill="url(#ball)" />
        <g stroke="#fff" fill="none" stroke-width="6"><circle cx="47" cy="27" r="4" fill="#fff" /><path d="M47 35L46 55L36 77M46 55L57 77M46 38L36 50M48 38L60 52" /><path d="M60 52L75 82" stroke-width="3" /></g>
        <path d="M75 35l12 0 12-12v30l-12-8-12 0z" fill="#7c8388" />
        <g class="rt"><text x="104" y="56" textLength="134" lengthAdjust="spacingAndGlyphs">Screen</text><text x="104" y="93" textLength="137" lengthAdjust="spacingAndGlyphs">Reader</text></g>
        <path d="M255 75h20v18h-20zM282 60h20v33h-20zM309 45h20v48h-20zM336 28h20v65h-20z" />
        <rect x="365" y="15" width="18" height="77" fill="#f2f2f2" stroke="#000" stroke-width="3" />
        <g fill="#fafafa" stroke="#111" stroke-width="4"><rect v-for="x in [430, 526, 622, 718]" :key="x" :x="x" y="20" width="71" height="68" rx="4" /><rect v-for="x in [844, 940, 1036]" :key="x" :x="x" y="20" width="71" height="68" stroke-width="5" /></g>
        <path d="M446 27v52l42-26zM536 30h23v49h-23zM565 30h23v49h-23zM633 30h51v49h-51z" />
        <g class="aa"><text x="722" y="55" font-size="44">A</text><text x="752" y="86" font-size="46" stroke="#000" stroke-width="1.500">A</text></g>
        <g v-for="(x, i) in [880, 976, 1072]" :key="x" stroke="#111" stroke-width="4" fill="none">
          <path v-if="i < 2" :d="`M${x - 31} 54h13M${x - 24} 29l9 10M${x - 24} 79l9-10`" />
          <path v-if="i !== 1" :d="`M${x + 18} 54h13M${x + 24} 29l-9 10M${x + 24} 79l-9-10`" />
          <path :d="`M${x} 24v11M${x} 73v11`" />
          <circle :cx="x" cy="54" r="15" fill="#fff" stroke="#999" stroke-width="2" />
          <path :d="`M${x} 39a15 15 0 0 0 0 30z`" fill="#000" stroke="none" />
        </g>
      </svg>
    </div>
  </div>
</template>

<style>
html, body { margin: 0; background: #fff; overflow: hidden; }
</style>
<style scoped>
* { box-sizing: border-box; }
.stage { width: 2032px; height: 1121px; padding: 39px 56px 0; overflow: hidden; background: #fff; font-family: "Liberation Sans", Arial, sans-serif; }
.window { position: relative; width: 1920px; height: 1008px; border-radius: 6px; overflow: hidden; background: #fff; box-shadow: 0 0 1px 1px rgba(0, 0, 0, .2), 0 22px 50px rgba(0, 0, 0, .42); }
.tabstrip { display: flex; height: 41px; background: #202124; align-items: flex-end; }
.lights { display: flex; gap: 8px; width: 78px; padding: 0 0 15px 13px; }
.lights i { width: 12px; height: 12px; border-radius: 50%; }
.r { background: #fc5b57; } .y { background: #febb40; } .g { background: #00ca4e; }
.tab { display: flex; align-items: center; width: 239px; height: 34px; padding: 0 11px 0 12px; border-radius: 8px 8px 0 0; color: #b4b7bb; font: 500 12px Roboto, sans-serif; }
.tab.active { background: #323639; color: #f3f4f5; }
.fav { width: 16px; height: 16px; flex: none; }
.tab-title { width: 175px; margin: 0 7px 0 8px; overflow: hidden; white-space: nowrap; font-size: 12.200px; letter-spacing: .3px; mask-image: linear-gradient(90deg, #000 88%, transparent 99%); }
.x { width: 10px; height: 10px; flex: none; }
.sep { width: 1px; height: 20px; margin: 0 17px 7px -1px; background: #4a4c50; }
.plus { width: 12px; height: 12px; margin-bottom: 11px; }
.toolbar { display: flex; align-items: center; height: 36px; background: #323639; padding-left: 14px; }
.navs { width: 92px; height: 20px; }
.omni { display: flex; align-items: center; width: 1738px; height: 30px; margin-left: 1px; border: 2px solid #506a93; border-radius: 15px; background: #3c4043; }
.lock { width: 9px; height: 13px; margin-left: 12px; }
.url { margin-left: 11px; padding: 0 1px; line-height: 18px; background: #1560b7; color: #fff; font-family: Roboto, sans-serif; font-size: 14px; letter-spacing: .42px; width: 308px; white-space: nowrap; -webkit-text-stroke: .2px #fff; }
.star { width: 16px; height: 16px; margin-left: auto; margin-right: 9px; }
.incog { width: 14px; height: 14px; margin-left: 14px; }
.dots { width: 4px; height: 14px; margin-left: 23px; }
.bookmarks { display: flex; height: 33px; padding: 0 0 4px 14px; gap: 16px; align-items: center; background: #323639; border-bottom: 1px solid #242628; color: #f1f3f4; font: 500 12px Roboto, sans-serif; letter-spacing: .14px; }
.bm { display: flex; align-items: center; gap: 8px; white-space: nowrap; }
.bm svg { width: 16px; height: 16px; flex: none; }
.ic { fill: #fff; font-family: Lato, sans-serif; font-weight: 900; letter-spacing: 0; }
.i { font-style: italic; }

.site { display: flex; justify-content: space-between; height: 154px; padding: 13px 359px 0 361px; border-bottom: 6px solid #bdd84a; font-family: "Noto Sans CJK SC", sans-serif; }
.logo { width: 324px; height: 114px; }
.logotext { font-family: Inter, sans-serif; font-weight: 900; }
.right { display: flex; flex-direction: column; align-items: flex-end; }
.buttons { display: flex; }
.btn { height: 39px; border-radius: 3px; color: #fff; font-size: 14.600px; letter-spacing: -.2px; line-height: 36px; text-align: center; }
.blue { width: 136px; background: #0081c6; }
.orange { width: 156px; margin: 0 16px 0 14px; background: #e57423; }
.mag { width: 27px; height: 27px; margin-top: 7px; }
nav { display: flex; gap: 49px; margin-top: 57px; color: #0081c6; font-size: 15.500px; font-weight: 500; letter-spacing: -.12px; line-height: 24px; white-space: nowrap; -webkit-text-stroke: .2px #0081c6; }
main { text-align: center; color: #222; font-size: 16px; }
a { color: #0081c6; }
.btn { color: #fff; }
h1 { margin: 28px 0 0; color: #0081c6; font: 400 32.500px/40px "Noto Sans CJK SC", sans-serif; letter-spacing: -.1px; }
.report { margin: 16px 0; color: #000; font: 14.600px/20px "Noto Sans CJK SC", sans-serif; letter-spacing: -.135px; }
.summary { display: grid; grid-template-columns: 241px 281px 268px 259px; width: 1049px; margin: 0 auto; line-height: 25px; }
.head { background: #ea7431; color: #fff; line-height: 26px; }
.form { display: flex; align-items: center; justify-content: center; height: 25px; }
.form input { width: 172px; height: 24px; margin: 0 5px 0 4px; border: 1px solid #bbb; padding: 0; }
.form button { width: 67px; height: 23px; padding: 0; border: 1px solid #a9a9a9; background: linear-gradient(#e9e9e9, #f4f4f4); color: #222; font: 16px "Liberation Sans", sans-serif; }
.note { margin: 18px 0 25px; line-height: 22px; white-space: nowrap; }
.content { display: flex; padding-left: 44px; gap: 42px; align-items: flex-start; text-align: left; }
.map { position: relative; width: 1348px; height: 600px; border: 2px solid #000; }
.tiles { display: block; }
.labels { font-family: "Noto Sans", sans-serif; fill: #333; stroke: rgba(255, 255, 255, .65); stroke-width: 2px; paint-order: stroke; }
.park { fill: #0c5f2a; font-style: italic; }
.state { fill: #9a6aa6; }
.zoom { position: absolute; left: 10px; top: 10px; width: 34px; height: 66px; border: 2px solid rgba(0, 0, 0, .2); border-radius: 4px; background: #fff; background-clip: padding-box; text-align: center; color: #000; }
.zoom b { display: block; height: 31px; font: bold 21px/30px "Liberation Sans", sans-serif; }
.zoom .minus { border-top: 1px solid #ccc; }
.info { position: absolute; left: 1115px; top: 300px; width: 179px; height: 53px; padding: 6px 8px; border-radius: 5px; background: rgba(255, 255, 255, .82); box-shadow: 0 0 15px rgba(0, 0, 0, .2); color: #000; font-size: 16px; white-space: nowrap; }
.info h4 { margin: 0 0 5px; color: #444; font-size: 16px; line-height: 18px; }
.legend { position: absolute; left: 10px; top: 309px; width: 95px; height: 220px; padding: 6px 8px; border-radius: 5px; background: rgba(255, 255, 255, .82); box-shadow: 0 0 15px rgba(0, 0, 0, .2); color: #444; }
.legend h5 { margin: 0 0 18px; font-size: 14px; line-height: 18px; }
.lg { display: flex; height: 18px; line-height: 18px; gap: 8px; white-space: nowrap; }
.lg i { width: 18px; height: 18px; flex: none; }
.outages { width: 430px; table-layout: fixed; border: 1px solid #444; border-spacing: 2px; color: #000; text-align: center; font-size: 16px; line-height: 18px; }
.outages th, .outages td { height: 64px; padding: 3px 4px; }
.outages th { background: #0081c6; color: #fff; font-weight: 400; -webkit-text-stroke: .6px #fff; }
.c1 { width: 101px; } .c2 { width: 71px; } .c3 { width: 85px; } .c4 { width: 92px; }
.outages .alt { background: #f4f4f4; }
.outages .narrow { padding: 0 20px; }
.reader { position: absolute; right: 0; bottom: 0; }
.rt { font-family: "Noto Sans CJK SC", sans-serif; font-size: 42px; fill: #111; }
.aa { font-family: "Liberation Sans", sans-serif; }
</style>
